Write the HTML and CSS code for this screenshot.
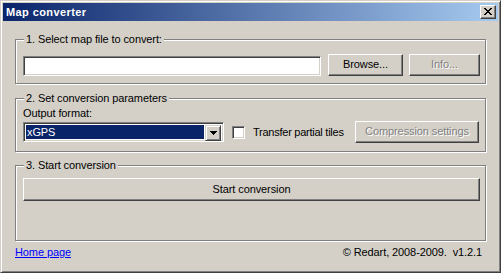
FILE: index.html
```html
<!DOCTYPE html>
<html>
<head>
<meta charset="utf-8">
<link rel="stylesheet" href="styles.css">
</head>
<body>
<div class="window">
  <div class="titlebar">
    <span class="title">Map converter</span>
    <div class="close">
      <svg width="8" height="7" viewBox="0 0 8 7"><path d="M0 0h2v1h-2zM6 0h2v1h-2zM1 1h2v1h-2zM5 1h2v1h-2zM2 2h4v1h-4zM3 3h2v1h-2zM2 4h4v1h-4zM1 5h2v1h-2zM5 5h2v1h-2zM0 6h2v1h-2zM6 6h2v1h-2z" fill="#000"/></svg>
    </div>
  </div>
  <div class="content">
    <div class="group g1">
      <span class="legend">1. Select map file to convert:</span>
      <div class="row r1">
        <div class="edit"></div>
        <div class="btn browse">Browse...</div>
        <div class="btn info disabled">Info...</div>
      </div>
    </div>
    <div class="group g2">
      <span class="legend">2. Set conversion parameters</span>
      <div class="label">Output format:</div>
      <div class="row r2">
        <div class="combo">
          <div class="combo-value">xGPS</div>
          <div class="combo-btn"><svg width="7" height="4" viewBox="0 0 7 4"><path d="M0 0h7v1h-7zM1 1h5v1h-5zM2 2h3v1h-3zM3 3h1v1h-1z" fill="#000"/></svg></div>
        </div>
        <div class="check"></div>
        <span class="check-label">Transfer partial tiles</span>
        <div class="btn compress disabled">Compression settings</div>
      </div>
    </div>
    <div class="group g3">
      <span class="legend">3. Start conversion</span>
      <div class="btn start">Start conversion</div>
    </div>
    <div class="footer">
      <a class="link" href="#">Home page</a>
      <span class="copy">© Redart, 2008-2009.&nbsp; v1.2.1</span>
    </div>
  </div>
</div>
</body>
</html>
```

FILE: styles.css
```css
* { box-sizing: border-box; }
html, body { margin: 0; padding: 0; background: #d4d0c8; }
body { font-family: "Liberation Sans", Arial, sans-serif; font-size: 11px; color: #000; letter-spacing: -0.1px; }

.window {
  width: 501px;
  height: 273px;
  background: #d4d0c8;
  border: 1px solid;
  border-color: #d4d0c8 #404040 #404040 #d4d0c8;
  box-shadow: inset 1px 1px 0 #fff, inset -1px -1px 0 #808080;
  padding: 2px;
  display: flex;
  flex-direction: column;
}

.titlebar {
  height: 18px;
  flex: none;
  background: linear-gradient(to right, #0a246a, #a6caf0);
  display: flex;
  align-items: center;
  padding: 0 2px 0 3px;
}
.title {
  color: #fff;
  font-weight: bold;
  font-size: 11px;
  letter-spacing: 0.4px;
  line-height: 13px;
}
.close {
  margin-left: auto;
  width: 16px;
  height: 14px;
  background: #d4d0c8;
  border: 1px solid;
  border-color: #fff #404040 #404040 #fff;
  box-shadow: inset -1px -1px 0 #808080;
  display: flex;
  align-items: center;
  justify-content: center;
  padding: 0 1px 1px 0;
}
.close svg { display: block; }

.content {
  flex: 1;
  display: flex;
  flex-direction: column;
  padding: 0 12px 0 12px;
}

.group {
  border: 1px solid #808080;
  box-shadow: inset 1px 1px 0 #fff, 1px 1px 0 #fff;
  display: flex;
  flex-direction: column;
  padding: 0 5px 0 7px;
  flex: none;
}
.legend {
  align-self: flex-start;
  background: #d4d0c8;
  line-height: 13px;
  height: 13px;
  margin-top: -7px;
  margin-left: 1px;
  padding: 0 2px;
}
.g1 { margin-top: 18px; height: 45px; }
.g2 { margin-top: 14px; height: 54px; }
.g3 { margin-top: 13px; height: 76px; }

.row { display: flex; align-items: center; }
.r1 { margin-top: 8px; height: 22px; align-items: flex-start; }
.r2 { margin-top: 1px; height: 22px; }
.label { line-height: 13px; margin-top: 2px; }

.edit {
  width: 298px;
  height: 20px;
  margin-top: 2px;
  background: #fff;
  border: 1px solid;
  border-color: #808080 #fff #fff #808080;
  box-shadow: inset 1px 1px 0 #404040, inset -1px -1px 0 #d4d0c8;
}

.btn {
  height: 22px;
  background: #d4d0c8;
  border: 1px solid;
  border-color: #fff #404040 #404040 #fff;
  box-shadow: inset -1px -1px 0 #808080;
  display: flex;
  align-items: center;
  justify-content: center;
  line-height: 13px;
  padding-bottom: 1px;
}
.disabled { color: #808080; text-shadow: 1px 1px 0 #fff; }
.browse { width: 75px; margin-left: 7px; }
.info { width: 71px; margin-left: 6px; }

.combo {
  width: 201px;
  height: 20px;
  background: #fff;
  border: 1px solid;
  border-color: #808080 #fff #fff #808080;
  box-shadow: inset 1px 1px 0 #404040, inset -1px -1px 0 #d4d0c8;
  padding: 2px;
  display: flex;
}
.combo-value {
  flex: 1;
  background: #0a246a;
  color: #fff;
  line-height: 14px;
  padding-left: 1px;
  margin: 0 1px 0 0;
}
.combo-btn {
  width: 16px;
  height: 16px;
  background: #d4d0c8;
  border: 1px solid;
  border-color: #d4d0c8 #404040 #404040 #d4d0c8;
  box-shadow: inset 1px 1px 0 #fff, inset -1px -1px 0 #808080;
  display: flex;
  align-items: center;
  justify-content: center;
}
.combo-btn svg { display: block; }

.check {
  width: 13px;
  height: 13px;
  margin-left: 8px;
  background: #fff;
  border: 1px solid;
  border-color: #808080 #fff #fff #808080;
  box-shadow: inset 1px 1px 0 #404040, inset -1px -1px 0 #d4d0c8;
}
.check-label { margin-left: 8px; line-height: 13px; letter-spacing: -0.25px; }
.compress { width: 124px; margin-left: auto; margin-right: 1px; }

.start { margin-top: 6px; height: 23px; }

.footer {
  margin-top: 5px;
  display: flex;
  justify-content: space-between;
  line-height: 13px;
  padding-right: 4px;
}
.link { color: #0000ff; text-decoration: underline; }
```
